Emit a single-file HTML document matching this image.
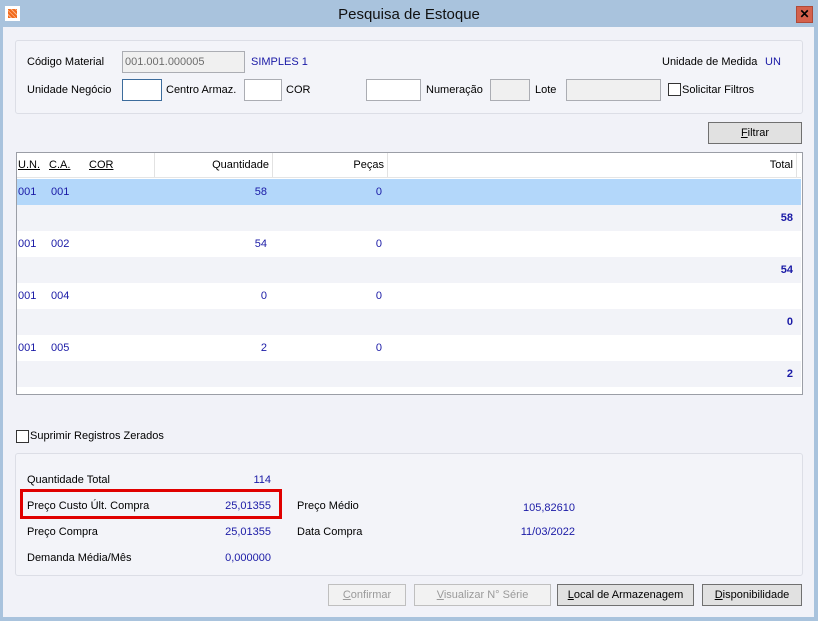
<!DOCTYPE html>
<html><head><meta charset="utf-8"><style>
*{margin:0;padding:0;box-sizing:border-box}
body{width:818px;height:621px;background:#a9c3dd;font-family:"Liberation Sans",sans-serif;font-size:11px;color:#000;position:relative;overflow:hidden}
.a{position:absolute;white-space:nowrap}
.client{position:absolute;left:3px;top:27px;width:811px;height:590px;background:#f1f2f8}
.panel{position:absolute;border:1px solid #dcdee6;border-radius:3px;background:#f3f4f9}
.inp{position:absolute;border:1px solid #abadb3;background:#fff;height:22px}
.dis{background:#f0f0f0}
.blue{color:#1a1aa6}
.btn{position:absolute;height:22px;border:1px solid #707070;background:#e1e1e1;text-align:center;line-height:20px}
.btn.off{border-color:#bfbfbf;background:#f2f2f2;color:#9a9a9a}
.cb{position:absolute;width:13px;height:13px;border:1px solid #333;background:#fff}
.row{position:absolute;left:17px;width:784px;height:26px}
</style></head><body>
<div class="a" style="left:5px;top:6px;width:15px;height:15px;background:#fff"></div>
<div class="a" style="left:8px;top:9px;width:9px;height:9px;background:repeating-linear-gradient(45deg,#f26b1d 0 2px,#fbb58a 2px 3px)"></div>
<div class="a" style="left:0;width:818px;text-align:center;top:6px;font-size:15px;color:#111">Pesquisa de Estoque</div>
<div class="a" style="left:796px;top:6px;width:17px;height:17px;background:#d4614c;border:1px solid #b04a38;color:#000;font-weight:bold;font-size:12px;text-align:center;line-height:15px">✕</div>
<div class="client"></div>

<div class="panel" style="left:15px;top:40px;width:788px;height:74px"></div>
<div class="a" style="left:27px;top:56px">Código Material</div>
<div class="inp dis" style="left:122px;top:51px;width:123px;padding:4px 2px;color:#6d6d6d">001.001.000005</div>
<div class="a blue" style="left:251px;top:56px">SIMPLES 1</div>
<div class="a" style="left:662px;top:56px">Unidade de Medida</div>
<div class="a blue" style="left:765px;top:56px">UN</div>
<div class="a" style="left:27px;top:84px">Unidade Negócio</div>
<div class="inp" style="left:122px;top:79px;width:40px;border-color:#3c6c9c"></div>
<div class="a" style="left:166px;top:84px">Centro Armaz.</div>
<div class="inp" style="left:244px;top:79px;width:38px"></div>
<div class="a" style="left:286px;top:84px">COR</div>
<div class="inp" style="left:366px;top:79px;width:55px"></div>
<div class="a" style="left:426px;top:84px">Numeração</div>
<div class="inp dis" style="left:490px;top:79px;width:40px"></div>
<div class="a" style="left:535px;top:84px">Lote</div>
<div class="inp dis" style="left:566px;top:79px;width:95px"></div>
<div class="cb" style="left:668px;top:83px"></div>
<div class="a" style="left:682px;top:84px">Solicitar Filtros</div>
<div class="btn" style="left:708px;top:122px;width:94px"><u>F</u>iltrar</div>

<div class="a" style="left:16px;top:152px;width:787px;height:243px;border:1px solid #9b9ea6;background:#fff"></div>
<div class="a" style="left:17px;top:153px;width:784px;height:25px;background:#fff"></div>
<div class="a" style="left:154px;top:153px;width:1px;height:25px;background:#e2e2e2"></div>
<div class="a" style="left:272px;top:153px;width:1px;height:25px;background:#e2e2e2"></div>
<div class="a" style="left:387px;top:153px;width:1px;height:25px;background:#e2e2e2"></div>
<div class="a" style="left:796px;top:153px;width:1px;height:25px;background:#e2e2e2"></div>
<div class="a" style="left:17px;top:177px;width:784px;height:1px;background:#e5e5e5"></div>
<div class="a" style="left:18px;top:159px"><u>U.N.</u></div>
<div class="a" style="left:49px;top:159px"><u>C.A.</u></div>
<div class="a" style="left:89px;top:159px"><u>COR</u></div>
<div class="a" style="left:200px;top:159px;width:69px;text-align:right">Quantidade</div>
<div class="a" style="left:320px;top:159px;width:64px;text-align:right">Peças</div>
<div class="a" style="left:700px;top:159px;width:93px;text-align:right">Total</div>

<div class="row" style="top:179px;background:#b3d7fa"></div>
<div class="row" style="top:205px;background:#f2f3f8"></div>
<div class="row" style="top:257px;background:#f2f3f8"></div>
<div class="row" style="top:309px;background:#f2f3f8"></div>
<div class="row" style="top:361px;background:#f2f3f8"></div>

<div class="a blue" style="left:18px;top:186px">001</div><div class="a blue" style="left:51px;top:186px">001</div><div class="a blue" style="left:200px;top:186px;width:67px;text-align:right">58</div><div class="a blue" style="left:320px;top:186px;width:62px;text-align:right">0</div>
<div class="a blue" style="left:700px;top:212px;width:93px;text-align:right;font-weight:bold">58</div>
<div class="a blue" style="left:18px;top:238px">001</div><div class="a blue" style="left:51px;top:238px">002</div><div class="a blue" style="left:200px;top:238px;width:67px;text-align:right">54</div><div class="a blue" style="left:320px;top:238px;width:62px;text-align:right">0</div>
<div class="a blue" style="left:700px;top:264px;width:93px;text-align:right;font-weight:bold">54</div>
<div class="a blue" style="left:18px;top:290px">001</div><div class="a blue" style="left:51px;top:290px">004</div><div class="a blue" style="left:200px;top:290px;width:67px;text-align:right">0</div><div class="a blue" style="left:320px;top:290px;width:62px;text-align:right">0</div>
<div class="a blue" style="left:700px;top:316px;width:93px;text-align:right;font-weight:bold">0</div>
<div class="a blue" style="left:18px;top:342px">001</div><div class="a blue" style="left:51px;top:342px">005</div><div class="a blue" style="left:200px;top:342px;width:67px;text-align:right">2</div><div class="a blue" style="left:320px;top:342px;width:62px;text-align:right">0</div>
<div class="a blue" style="left:700px;top:368px;width:93px;text-align:right;font-weight:bold">2</div>

<div class="cb" style="left:16px;top:430px"></div>
<div class="a" style="left:30px;top:430px">Suprimir Registros Zerados</div>

<div class="panel" style="left:15px;top:453px;width:788px;height:123px"></div>
<div class="a" style="left:27px;top:474px">Quantidade Total</div>
<div class="a blue" style="left:200px;top:474px;width:71px;text-align:right">114</div>
<div class="a" style="left:20px;top:489px;width:262px;height:30px;border:3px solid #e00000"></div>
<div class="a" style="left:27px;top:500px">Preço Custo Últ. Compra</div>
<div class="a blue" style="left:200px;top:500px;width:71px;text-align:right">25,01355</div>
<div class="a" style="left:297px;top:500px">Preço Médio</div>
<div class="a blue" style="left:480px;top:502px;width:95px;text-align:right">105,82610</div>
<div class="a" style="left:27px;top:526px">Preço Compra</div>
<div class="a blue" style="left:200px;top:526px;width:71px;text-align:right">25,01355</div>
<div class="a" style="left:297px;top:526px">Data Compra</div>
<div class="a blue" style="left:480px;top:526px;width:95px;text-align:right">11/03/2022</div>
<div class="a" style="left:27px;top:552px">Demanda Média/Mês</div>
<div class="a blue" style="left:200px;top:552px;width:71px;text-align:right">0,000000</div>

<div class="btn off" style="left:328px;top:584px;width:78px"><u>C</u>onfirmar</div>
<div class="btn off" style="left:414px;top:584px;width:137px"><u>V</u>isualizar N° Série</div>
<div class="btn" style="left:557px;top:584px;width:137px"><u>L</u>ocal de Armazenagem</div>
<div class="btn" style="left:702px;top:584px;width:100px"><u>D</u>isponibilidade</div>
</body></html>
